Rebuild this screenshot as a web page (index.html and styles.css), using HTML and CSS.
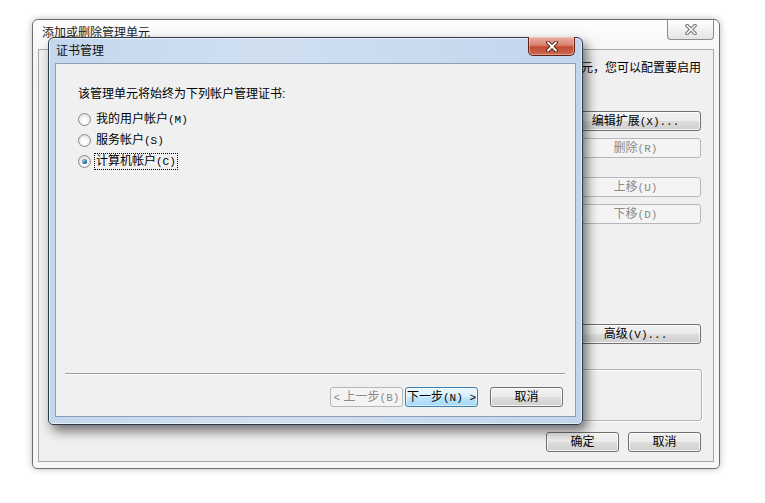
FILE: index.html
```html
<!DOCTYPE html>
<html lang="zh-CN">
<head>
  <meta charset="UTF-8" />
  <meta name="viewport" content="width=device-width, initial-scale=1.0"/>
  <title>证书管理</title>
  <link rel="stylesheet" href="styles.css">
</head>
<body>
  <div class="desktop">

    <!-- Back window: 添加或删除管理单元 -->
    <div class="window outer-win">
      <div class="outer-title">
        <span class="title-text">添加或删除管理单元</span>
        <button class="outer-close">
          <svg width="14" height="11" viewBox="0 0 14 11">
            <path d="M3 1.5 L11 9.5 M11 1.5 L3 9.5" stroke="#6f6f6f" stroke-width="3.6" stroke-linecap="round"/>
            <path d="M3 1.5 L11 9.5 M11 1.5 L3 9.5" stroke="#fafafa" stroke-width="1.7" stroke-linecap="round"/>
          </svg>
        </button>
      </div>
      <div class="outer-client">
        <p class="outer-desc">对于可扩展的管理单元，您可以配置要启用</p>
        <div class="outer-main">
          <div class="snapin-lists">
            <div class="list-box"></div>
            <div class="list-box"></div>
          </div>
          <div class="side-btns">
            <button class="btn">编辑扩展<span class="key">(X)...</span></button>
            <button class="btn" disabled>删除<span class="key">(R)</span></button>
            <button class="btn move-up" disabled>上移<span class="key">(U)</span></button>
            <button class="btn" disabled>下移<span class="key">(D)</span></button>
            <button class="btn advanced">高级<span class="key">(V)...</span></button>
          </div>
        </div>
        <div class="desc-group"></div>
        <div class="outer-footer">
          <button class="btn small">确定</button>
          <button class="btn small">取消</button>
        </div>
      </div>
    </div>

    <!-- Front dialog: 证书管理 -->
    <div class="window cert-win">
      <div class="cert-title">
        <span class="title-text">证书管理</span>
        <button class="cert-close">
          <svg width="14" height="11" viewBox="0 0 14 11">
            <path d="M3 1.5 L11 9.5 M11 1.5 L3 9.5" stroke="#4a1208" stroke-width="3.8" stroke-linecap="round"/>
            <path d="M3 1.5 L11 9.5 M11 1.5 L3 9.5" stroke="#ffffff" stroke-width="2" stroke-linecap="round"/>
          </svg>
        </button>
      </div>
      <div class="cert-client">
        <div class="cert-body">
          <p class="prompt">该管理单元将始终为下列帐户管理证书:</p>
          <div class="radio-row"><span class="radio"></span><span class="radio-label">我的用户帐户<span class="key">(M)</span></span></div>
          <div class="radio-row"><span class="radio"></span><span class="radio-label">服务帐户<span class="key">(S)</span></span></div>
          <div class="radio-row"><span class="radio checked"></span><span class="radio-label focused">计算机帐户<span class="key">(C)</span></span></div>
        </div>
        <div class="sep"></div>
        <div class="wizard-footer">
          <button class="btn small" disabled><span class="key">&lt;</span> 上一步<span class="key">(B)</span></button>
          <button class="btn small default">下一步<span class="key">(N) &gt;</span></button>
          <button class="btn small cancel">取消</button>
        </div>
      </div>
    </div>

  </div>
</body>
</html>
```

FILE: styles.css
```css
body {
  margin: 0;
  padding: 0;
  background: #ffffff;
  font-family: "Liberation Sans", "Noto Sans CJK SC", sans-serif;
  font-size: 12px;
  color: #000;
  overflow: hidden;
}

.desktop {
  position: relative;
  width: 765px;
  height: 503px;
}

/* mnemonic letters are half width, like the system font */
.key {
  font-family: "Liberation Mono", monospace;
  font-size: 11px;
}

.window {
  position: absolute;
  box-sizing: border-box;
  display: flex;
  flex-direction: column;
}

/* ---------- back window ---------- */
.outer-win {
  left: 32px;
  top: 19px;
  width: 688px;
  height: 450px;
  border: 1px solid #6e6e6e;
  border-radius: 6px 6px 5px 5px;
  padding: 0 5px 6px;
  background: linear-gradient(#fdfdfd, #f4f4f4 40px, #f7f7f7);
  box-shadow: 0 0 7px rgba(0, 0, 0, 0.28);
}

.outer-title {
  height: 29px;
  display: flex;
  align-items: flex-start;
}

.outer-title .title-text {
  padding: 6px 0 0 4px;
  line-height: 15px;
  color: #1e1e1e;
}

.outer-close {
  margin: -1px 0 0 auto;
  width: 47px;
  height: 21px;
  padding: 0;
  border: 1px solid #8c8c8c;
  border-top-color: #6e6e6e;
  border-radius: 0 0 4px 4px;
  background: linear-gradient(#ffffff, #f1f1f1 50%, #e4e4e4);
  display: flex;
  align-items: center;
  justify-content: center;
}

.outer-client {
  flex: 1;
  border: 1px solid #a7a7a7;
  background: #f0f0f0;
  display: flex;
  flex-direction: column;
  padding: 11px 12px 9px 13px;
}

.outer-desc {
  margin: 0 0 15px;
  line-height: 15px;
  white-space: nowrap;
  text-align: right;
}

.outer-main {
  flex: 1;
  display: flex;
  gap: 12px;
}

.snapin-lists {
  flex: 1;
  display: flex;
  gap: 10px;
  padding-top: 20px;
}

.list-box {
  flex: 1;
  height: 230px;
  border: 1px solid #828790;
  background: #fff;
}

.side-btns {
  width: 131px;
  display: flex;
  flex-direction: column;
  padding-top: 20px;
}

.side-btns .btn + .btn {
  margin-top: 7px;
}

.side-btns .move-up {
  margin-top: 19px !important;
}

.side-btns .advanced {
  margin-top: 100px !important;
}

.desc-group {
  height: 50px;
  margin-right: -1px;
  border: 1px solid #b4b4b4;
  border-radius: 3px;
  box-shadow: inset 1px 1px 0 #ffffff, 1px 1px 0 #ffffff;
}

.outer-footer {
  display: flex;
  justify-content: flex-end;
  gap: 9px;
  margin-top: 11px;
}

/* ---------- buttons ---------- */
.btn {
  box-sizing: border-box;
  height: 20px;
  padding: 0;
  font-family: inherit;
  font-size: 12px;
  line-height: 18px;
  color: #000;
  border: 1px solid #707070;
  border-radius: 3px;
  background: linear-gradient(#f2f2f2 0%, #ebebeb 50%, #dddddd 51%, #cfcfcf 100%);
  box-shadow: inset 0 0 0 1px rgba(255, 255, 255, 0.8);
}

.btn.small {
  width: 73px;
}

.btn:disabled {
  color: #8a8a8a;
  border-color: #b5b8ba;
  background: #f4f4f4;
  box-shadow: none;
}

.btn.default {
  border-color: #3c7fb1;
  background: linear-gradient(#eaf6fd 0%, #d9f0fc 50%, #bee6fd 51%, #a7d9f5 100%);
  box-shadow: inset 0 0 0 1px rgba(255, 255, 255, 0.5);
}

/* ---------- front dialog ---------- */
.cert-win {
  left: 48px;
  top: 37px;
  width: 535px;
  height: 388px;
  border: 1px solid #2f3b49;
  border-radius: 6px 6px 5px 5px;
  padding: 0 6px 7px;
  background: linear-gradient(90deg, #c3d7ed, #d0e0f1 40%, #c1d5ec);
  box-shadow: 4px 6px 12px rgba(0, 0, 0, 0.55), inset 0 0 0 1px rgba(255, 255, 255, 0.6);
}

.cert-title {
  height: 25px;
  display: flex;
  align-items: flex-start;
}

.cert-title .title-text {
  padding: 6px 0 0 1px;
  line-height: 15px;
  color: #111;
}

.cert-close {
  margin: -1px 1px 0 auto;
  width: 47px;
  height: 19px;
  padding: 0;
  border: 1px solid #5d2118;
  border-top: none;
  border-radius: 0 0 5px 5px;
  background: linear-gradient(#eab1a5 0%, #d9826f 45%, #c14a33 55%, #cf6a52 100%);
  box-shadow: inset 0 0 0 1px rgba(255, 220, 210, 0.45);
  display: flex;
  align-items: center;
  justify-content: center;
}

.cert-client {
  flex: 1;
  border: 1px solid #8e9fb4;
  background: #f0f0f0;
  display: flex;
  flex-direction: column;
}

.cert-body {
  flex: 1;
  padding: 23px 0 0 22px;
}

.prompt {
  margin: 0 0 7px;
  line-height: 15px;
}

.radio-row {
  height: 21px;
  display: flex;
  align-items: center;
}

.radio {
  box-sizing: border-box;
  width: 13px;
  height: 13px;
  border-radius: 50%;
  border: 1px solid #8a8b8b;
  background: radial-gradient(circle at 50% 60%, #ffffff 20%, #d4d4d4 100%);
  display: flex;
  align-items: center;
  justify-content: center;
}

.radio.checked::after {
  content: "";
  width: 5px;
  height: 5px;
  border-radius: 50%;
  background: radial-gradient(circle at 35% 35%, #9bd6f7 0%, #2c6b98 55%, #0f3350 100%);
}

.radio-label {
  margin-left: 3px;
  line-height: 14px;
  padding: 0 1px;
  border: 1px solid transparent;
}

.radio-label.focused {
  border: 1px dotted #000;
}

.sep {
  margin: 0 10px 0 9px;
  border-top: 1px solid #a0a0a0;
  border-bottom: 1px solid #ffffff;
}

.wizard-footer {
  display: flex;
  justify-content: flex-end;
  gap: 2px;
  margin-top: 12px;
  padding: 0 12px 9px 0;
}

.wizard-footer .cancel {
  margin-left: 10px;
}
```
